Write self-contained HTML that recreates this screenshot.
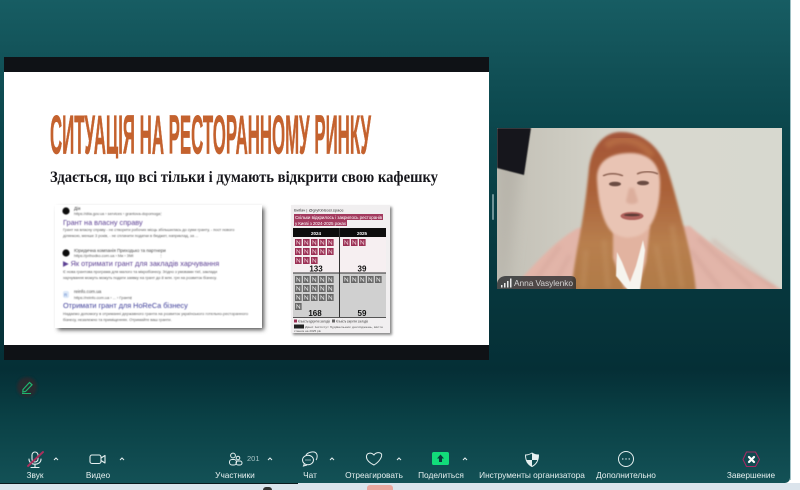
<!DOCTYPE html>
<html lang="uk">
<head>
<meta charset="utf-8">
<title>Zoom</title>
<style>
html,body{margin:0;padding:0;width:800px;height:490px;overflow:hidden;background:#fff}
#root{position:relative;width:800px;height:490px;overflow:hidden;font-family:"Liberation Sans",sans-serif}
#win{position:absolute;left:0;top:0;width:790px;height:483px;border-bottom-right-radius:5px;
background:linear-gradient(180deg,#175d63 0,#125258 60px,#0b464c 130px,#073a40 250px,#052f36 370px,#0a4146 420px,#135156 483px)}
#rstrip{position:absolute;left:790px;top:0;width:1px;height:480px;background:#9fc0c4}
#bot{position:absolute;left:0;top:483px;width:800px;height:7px;background:#dbe4ec}
#botline{position:absolute;left:0;top:483px;width:298px;height:1px;background:#0a1a1e}
#pink{position:absolute;left:367px;top:485px;width:26px;height:5px;background:#eba79f;border-radius:3px 3px 0 0}
#dark{position:absolute;left:263px;top:487px;width:9px;height:3px;background:#333;border-radius:3px 3px 0 0}
.lbl{position:absolute;top:470px;height:11px;line-height:11px;font-size:8.3px;color:#e6f0f0;white-space:nowrap;transform:translateX(-50%);filter:blur(.2px)}
svg{position:absolute;left:0;top:0;overflow:visible}
</style>
</head>
<body>
<div id="root">
<div id="win"></div>
<div id="rstrip"></div>
<div id="bot"></div>
<div id="botline"></div>
<div id="pink"></div>
<div id="dark"></div>

<svg width="800" height="490" viewBox="0 0 800 490" xmlns="http://www.w3.org/2000/svg">
<defs>
<filter id="b03"><feGaussianBlur stdDeviation="0.35"/></filter>
<filter id="b05"><feGaussianBlur stdDeviation="0.55"/></filter>
<filter id="b1"><feGaussianBlur stdDeviation="1.2"/></filter>
<filter id="b2"><feGaussianBlur stdDeviation="2.2"/></filter>
<filter id="b5"><feGaussianBlur stdDeviation="7"/></filter>
<linearGradient id="wall" x1="0" x2="1" y1="0" y2="0">
<stop offset="0" stop-color="#c2bfb5"/><stop offset=".25" stop-color="#cdcbc1"/><stop offset=".5" stop-color="#d8d8cf"/><stop offset="1" stop-color="#d7d8cf"/>
</linearGradient>
<linearGradient id="hair" x1="0" x2="0" y1="0" y2="1">
<stop offset="0" stop-color="#a4563a"/><stop offset=".35" stop-color="#aa6038"/><stop offset=".7" stop-color="#b87f4e"/><stop offset="1" stop-color="#b07a48"/>
</linearGradient>
<clipPath id="vid"><rect x="497" y="128" width="285" height="161"/></clipPath>
<pattern id="pk" patternUnits="userSpaceOnUse" x="295" y="239" width="8" height="9">
<rect width="6.600" height="7" fill="#9a2f52"/><path d="M1.800 5.500 V1.500 L4.800 5.500 V1.500" fill="none" stroke="#e4bcc8" stroke-width=".7"/>
</pattern>
<pattern id="gr" patternUnits="userSpaceOnUse" x="295" y="276" width="8" height="9">
<rect width="6.600" height="7" fill="#666"/><path d="M1.800 5.500 V1.500 L4.800 5.500 V1.500" fill="none" stroke="#ddd" stroke-width=".7"/>
</pattern>
</defs>

<!-- slide -->
<rect x="4" y="57" width="485" height="303" fill="#0f1216"/>
<rect x="4" y="72" width="485" height="273" fill="#fff"/>
<text x="50" y="153.500" font-family="'Liberation Sans',sans-serif" font-weight="700" font-size="55" fill="#c4622f" stroke="#c4622f" stroke-width=".7" textLength="321" lengthAdjust="spacingAndGlyphs" filter="url(#b03)">СИТУАЦІЯ НА РЕСТОРАННОМУ РИНКУ</text>
<rect x="45" y="158.500" width="330" height="9" fill="#fff"/>
<text x="50" y="182" font-family="'Liberation Serif',serif" font-weight="700" font-size="15.5" fill="#17171a" textLength="388" lengthAdjust="spacingAndGlyphs" filter="url(#b03)">Здається, що всі тільки і думають відкрити свою кафешку</text>

<!-- left result card -->
<rect x="58" y="208" width="206" height="122" fill="#555" filter="url(#b2)"/>
<rect x="55" y="205" width="207" height="123" fill="#fff"/>
<g filter="url(#b05)" font-family="'Liberation Sans',sans-serif">
<circle cx="66" cy="211" r="3.6" fill="#111"/>
<text x="74" y="210" font-size="4.5" fill="#333">Дія</text>
<text x="74" y="215" font-size="3.9" fill="#555">https://diia.gov.ua › services › grantova-dopomoga</text>
<text x="159" y="215" font-size="4" fill="#555">⋮</text>
<text x="63" y="225" font-size="7.300" fill="#5b3f93">Грант на власну справу</text>
<text x="63" y="231" font-size="3.9" fill="#555">Грант на власну справу - не створити робочих місць збільшилась до суми гранту, - пост нового</text>
<text x="63" y="237" font-size="3.9" fill="#555">ділянкою, менше 3 років, - не сплачити податки в бюджет, наприклад, за ...</text>
<circle cx="66" cy="253" r="3.6" fill="#111"/>
<text x="74" y="252" font-size="4.5" fill="#444">Юридична компанія Приходько та партнери</text>
<text x="74" y="257" font-size="3.9" fill="#555">https://prihodko.com.ua › Ми › ЗМІ</text>
<text x="159" y="257" font-size="4" fill="#555">⋮</text>
<text x="63" y="266" font-size="7.300" fill="#5b3f93">▶ Як отримати грант для закладів харчування</text>
<text x="63" y="273" font-size="3.9" fill="#555">Є нова грантова програма для малого та мікробізнесу. Згідно з умовами тієї, заклади</text>
<text x="63" y="279" font-size="3.9" fill="#555">харчування можуть можуть подати заявку на грант до 8 млн. грн на розвиток бізнесу.</text>
<rect x="63" y="291" width="6" height="7" rx="2" fill="#dce8f8"/>
<text x="64" y="296.500" font-size="4.500" fill="#4b78c8">R</text>
<text x="74" y="293" font-size="4.5" fill="#444">reinfo.com.ua</text>
<text x="74" y="299" font-size="3.9" fill="#555">https://reinfo.com.ua › ... › Гранти</text>
<text x="129" y="299" font-size="4" fill="#555">⋮</text>
<text x="63" y="308" font-size="7.300" fill="#3f3f9a">Отримати грант для HoReCa бізнесу</text>
<text x="63" y="315" font-size="3.9" fill="#555" textLength="185">Надаємо допомогу в отриманні державного гранта на розвиток українського готельно-ресторанного</text>
<text x="63" y="321" font-size="3.9" fill="#555">бізнесу, незалежно та приміщеннях. Отримайте ваш гранти.</text>
</g>

<!-- right infographic card -->
<rect x="293" y="207" width="99" height="128" fill="#888" filter="url(#b1)"/>
<rect x="291" y="205" width="99" height="128" fill="#f1eff0"/>
<g filter="url(#b03)" font-family="'Liberation Sans',sans-serif">
<text x="294" y="211.500" font-size="4" fill="#333">Вибач | @gryfoblsosi.space</text>
<rect x="294" y="214" width="89" height="6" fill="#a33a5e"/>
<rect x="294" y="220" width="53" height="6" fill="#a33a5e"/>
<text x="295" y="219" font-size="4.500" fill="#fff" textLength="87">Скільки відкрилось і закрилось ресторанів</text>
<text x="295" y="225" font-size="4.500" fill="#fff" textLength="51">у Києві з 2024-2025 роках</text>
<rect x="293" y="228" width="93" height="9" fill="#0e0e10"/>
<text x="316" y="235" font-size="4.500" font-weight="700" fill="#fff" text-anchor="middle">2024</text>
<text x="362" y="235" font-size="4.500" font-weight="700" fill="#fff" text-anchor="middle">2025</text>
<rect x="293" y="237" width="93" height="36" fill="#f6eff1"/>
<rect x="293" y="273" width="93" height="44" fill="#d0d0d0"/>
<rect x="293" y="272.500" width="93" height="1" fill="#333"/>
<rect x="339" y="228" width="1" height="89" fill="#333"/>
<rect x="293" y="317" width="93" height="1" fill="#555"/>
<rect x="295" y="239" width="40" height="18" fill="url(#pk)"/>
<rect x="295" y="257" width="24" height="7" fill="url(#pk)"/>
<rect x="343" y="239" width="24" height="7" fill="url(#pk)"/>
<rect x="295" y="276" width="40" height="27" fill="url(#gr)"/>
<rect x="295" y="303" width="8" height="7" fill="url(#gr)"/>
<rect x="343" y="276" width="40" height="7" fill="url(#gr)"/>
<text x="316" y="271.500" font-size="8" font-weight="700" fill="#111" text-anchor="middle">133</text>
<text x="362" y="271.500" font-size="8" font-weight="700" fill="#111" text-anchor="middle">39</text>
<text x="315" y="316" font-size="8" font-weight="700" fill="#111" text-anchor="middle">168</text>
<text x="362" y="316" font-size="8" font-weight="700" fill="#111" text-anchor="middle">59</text>
<rect x="294" y="319.500" width="3" height="3" fill="#9a2f52"/>
<text x="298" y="322.500" font-size="3.300" fill="#444" textLength="32" lengthAdjust="spacingAndGlyphs">Кількість відкритих закладів</text>
<rect x="332" y="319.500" width="3" height="3" fill="#666"/>
<text x="336" y="322.500" font-size="3.300" fill="#444" textLength="32" lengthAdjust="spacingAndGlyphs">Кількість закритих закладів</text>
<rect x="294" y="324.500" width="10" height="4" fill="#222"/>
<text x="305" y="328" font-size="3.100" fill="#555" textLength="78" lengthAdjust="spacingAndGlyphs">Дані: Інститут будівельних досліджень, місто</text>
<text x="294" y="332" font-size="3.100" fill="#555">станом на 2025 рік</text>
</g>

<!-- video -->
<g clip-path="url(#vid)">
<rect x="497" y="128" width="285" height="161" fill="url(#wall)"/>
<path d="M525 128 L505 289 L497 289 L497 128Z" fill="#b7b4aa" filter="url(#b5)"/>
<polygon points="497,128 531,128 524,175 497,168" fill="#16171a" filter="url(#b05)"/>
<!-- sweater -->
<path d="M511 290 C526 274 552 242 578 228 L690 226 C712 246 750 272 783 290 L783 294 L511 294Z" fill="#e2b5a9" filter="url(#b1)"/>
<path d="M698 238 L752 288 M712 240 L775 288 M690 250 L720 288" stroke="#c9988d" stroke-width="4" opacity=".35" filter="url(#b2)"/>
<path d="M560 246 L530 288 M570 255 L552 288" stroke="#c9988d" stroke-width="4" opacity=".3" filter="url(#b2)"/>
<!-- hair -->
<path d="M621 132 C604 132 592 146 589 168 C586 200 582 225 577 250 C574 268 572 280 572 291 L696 291 C694 268 689 248 684 228 C678 205 672 182 667 168 C660 148 643 132 621 132Z" fill="url(#hair)" filter="url(#b1)"/>
<path d="M586 250 L583 288 M604 240 L608 288 M672 225 L682 288 M656 245 L664 288" stroke="#c69565" stroke-width="5" fill="none" opacity=".4" filter="url(#b2)"/>
<path d="M606 146 C618 136 640 138 652 156" stroke="#c0784a" stroke-width="7" fill="none" opacity=".6" filter="url(#b2)"/>
<!-- neck & chest -->
<path d="M613 226 L650 226 L646 262 L638 288 L624 288 L613 258Z" fill="#e2b3a0" filter="url(#b1)"/>
<!-- shirt -->
<path d="M617 252 L622 262 L630 282 L636 266 L643 240 L645 250 L640 290 L628 290 L616 276Z" fill="#f6f4ee" filter="url(#b05)"/>
<!-- face -->
<path d="M597 180 C596 160 612 153 630 153 C650 153 661 165 660 185 C660 207 654 226 642 234 C632 239 622 239 612 232 C602 222 598 200 597 180Z" fill="#e9c4b4" filter="url(#b1)"/>
<path d="M603 176 C608 173 617 173 623 176 M637 174 C643 171 652 171 658 174" stroke="#7a5040" stroke-width="1.500" fill="none" opacity=".85" filter="url(#b05)"/>
<ellipse cx="615" cy="184" rx="6" ry="2.300" fill="#6a4c42" filter="url(#b05)"/>
<ellipse cx="643" cy="183" rx="6" ry="2.300" fill="#6a4c42" filter="url(#b05)"/>
<path d="M629 188 L626 201 C627 205 637 205 638 201 L634 188Z" fill="#dcae9c" filter="url(#b1)"/>
<ellipse cx="632" cy="216" rx="11.500" ry="4" fill="#b0625c" filter="url(#b05)"/>
<ellipse cx="632" cy="215" rx="8" ry="1.300" fill="#5a3a36" filter="url(#b05)"/>
</g>
<!-- name tag -->
<path d="M497 289 L497 283 Q499 276 506 276 L571 276 Q576 276 576 281 L576 289Z" fill="#2a2d2f" fill-opacity=".8"/>
<g fill="#e8e8e8"><rect x="501" y="285" width="1.500" height="2.500"/><rect x="504" y="283" width="1.500" height="4.500"/><rect x="507" y="281" width="1.500" height="6.500"/><rect x="510" y="278.500" width="1.500" height="9"/></g>
<text x="514" y="286" font-family="'Liberation Sans',sans-serif" font-size="8.400" fill="#d2d2d2" textLength="59" filter="url(#b03)">Anna Vasylenko</text>

<!-- scrollbar handle -->
<rect x="492" y="194" width="2" height="26" rx="1" fill="#6f9397"/>

<!-- pen -->
<circle cx="27" cy="387" r="10" fill="#35262c" opacity=".7" filter="url(#b1)"/>
<path d="M23 389.500 L29.500 382.500 L32 384.800 L25.500 391.500 L22.800 392Z" fill="none" stroke="#1fb56f" stroke-width="1.200"/>
<path d="M22 393.500 H31" stroke="#1fb56f" stroke-width="1"/>

<!-- audio muted -->
<g fill="none" stroke="#e6f0f0" stroke-width="1.100" stroke-linecap="round">
<rect x="32" y="452" width="6" height="10" rx="3"/>
<path d="M29 459 C29 466 41 466 41 459 M35 464 V467 M31 467.500 H39"/>
</g>
<path d="M28 466 L43 452" stroke="#a8305c" stroke-width="2" stroke-linecap="round"/>
<path d="M54 460 L56 458 L58 460" fill="none" stroke="#e6f0f0" stroke-width="1"/>
<!-- video -->
<g fill="none" stroke="#e6f0f0" stroke-width="1.100" stroke-linejoin="round">
<rect x="90" y="455" width="11" height="8.500" rx="2"/>
<path d="M101 458 L105 455.500 V463 L101 460.500"/>
</g>
<path d="M120 460 L122 458 L124 460" fill="none" stroke="#e6f0f0" stroke-width="1"/>
<!-- participants -->
<g fill="none" stroke="#e6f0f0" stroke-width="1">
<circle cx="233" cy="455.500" r="2.400"/>
<rect x="229.500" y="459.500" width="7" height="5.500" rx="2.500"/>
<circle cx="238" cy="458" r="1.800"/>
<rect x="236" y="461" width="6" height="4" rx="2"/>
</g>
<text x="247" y="461" font-family="'Liberation Sans',sans-serif" font-size="7.500" fill="#a9c4c6">201</text>
<path d="M268 460 L270 458 L272 460" fill="none" stroke="#e6f0f0" stroke-width="1"/>
<!-- chat -->
<g fill="none" stroke="#e6f0f0" stroke-width="1">
<path d="M306 455 C308 452 314 451 316 453 C318 455 317 459 316 460"/>
<ellipse cx="308" cy="460" rx="5.500" ry="4.800"/>
<path d="M304.500 463.500 L303.500 466 L307 465"/>
</g>
<g fill="#e6f0f0"><circle cx="306" cy="460" r=".6"/><circle cx="308" cy="460" r=".6"/><circle cx="310" cy="460" r=".6"/></g>
<path d="M330 460 L332 458 L334 460" fill="none" stroke="#e6f0f0" stroke-width="1"/>
<!-- heart -->
<path d="M374 465 C370 463 366 460 366.500 456 C367 453 371 452 374 455 C376 452 380 452 381.500 454 C382.500 457 379 462 374 465Z" fill="none" stroke="#e6f0f0" stroke-width="1"/>
<path d="M397 460 L399 458 L401 460" fill="none" stroke="#e6f0f0" stroke-width="1"/>
<!-- share -->
<rect x="432" y="452" width="17" height="13" rx="1.800" fill="#12dc7a"/>
<path d="M440.500 454.500 L444 458.500 H442 V462 H439 V458.500 H437Z" fill="#0b3a3d"/>
<path d="M463 460 L465 458 L467 460" fill="none" stroke="#e6f0f0" stroke-width="1"/>
<!-- shield -->
<path d="M532 453 C534.500 454.500 536.500 455 538.500 455 C538.500 460 537 464 532 466.500 C527 464 525.500 460 525.500 455 C527.500 455 529.500 454.500 532 453Z" fill="none" stroke="#e6f0f0" stroke-width="1"/>
<path d="M532 453 C534.500 454.500 536.500 455 538.500 455 L538 460 H532Z M532 460 V466.500 C529 465 527 463 526 460Z" fill="#e6f0f0"/>
<!-- more -->
<circle cx="626" cy="459" r="7.500" fill="none" stroke="#e6f0f0" stroke-width="1"/>
<g fill="#e6f0f0"><circle cx="622.800" cy="459" r=".7"/><circle cx="626" cy="459" r=".7"/><circle cx="629.200" cy="459" r=".7"/></g>
<!-- end -->
<path d="M746.500 452 H755.500 L759.500 459.500 L755.500 466.500 H746.500 L743 459.500Z" fill="none" stroke="#a32a63" stroke-width="1.100" stroke-linejoin="round"/>
<path d="M749 457 L754 462 M754 457 L749 462" stroke="#fff" stroke-width="2.200" stroke-linecap="round"/>
</svg>

<div class="lbl" style="left:35px">Звук</div>
<div class="lbl" style="left:98px">Видео</div>
<div class="lbl" style="left:235px">Участники</div>
<div class="lbl" style="left:310px">Чат</div>
<div class="lbl" style="left:374px">Отреагировать</div>
<div class="lbl" style="left:441px">Поделиться</div>
<div class="lbl" style="left:532px">Инструменты организатора</div>
<div class="lbl" style="left:626px">Дополнительно</div>
<div class="lbl" style="left:751px">Завершение</div>
</div>
</body>
</html>
